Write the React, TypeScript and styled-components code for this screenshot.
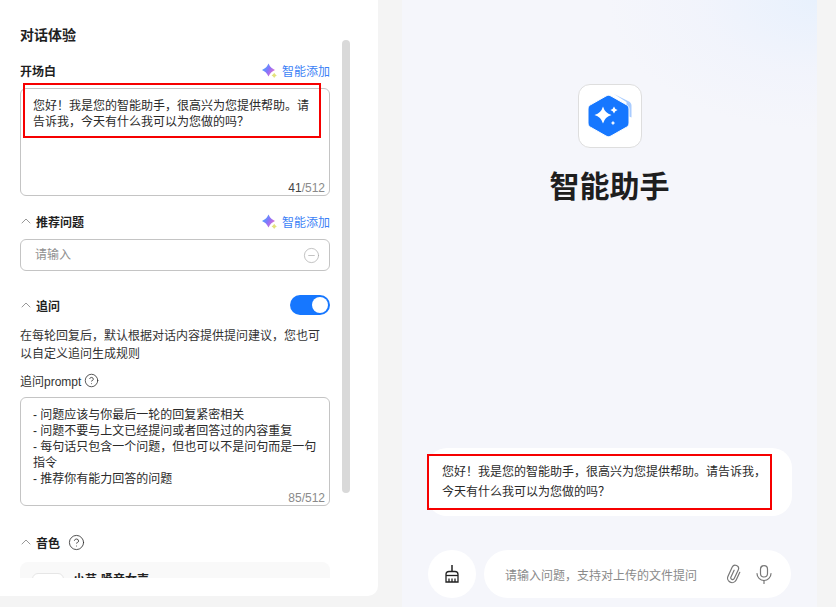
import React from 'react';
import styled, { createGlobalStyle } from 'styled-components';
import { ChevronUp, CircleHelp, CircleMinus } from 'lucide-react';

const FONT = `"Liberation Sans", "Noto Sans CJK SC", sans-serif`;

const GlobalStyle = createGlobalStyle`
  html, body {
    margin: 0;
    padding: 0;
    height: 100%;
    overflow: hidden;
    background: #f4f4f4;
    font-family: ${FONT};
  }
  * { box-sizing: border-box; }
`;

const Page = styled.div`
  width: 836px;
  height: 607px;
  display: flex;
  overflow: hidden;
`;

const ConfigPanel = styled.aside`
  position: relative;
  width: 378px;
  height: 596px;
  background: #fff;
  border-bottom-right-radius: 10px;
  overflow: hidden;
  display: flex;
  flex: none;
`;

const ConfigScroll = styled.div`
  width: 330px;
  height: 578px;
  padding: 27px 0 0 20px;
  overflow: hidden;
  flex: none;
`;

const Scrollbar = styled.div`
  width: 8px;
  height: 453px;
  margin: 40px 0 0 12px;
  background: #d9d9d9;
  border-radius: 4px;
  flex: none;
`;

const PanelTitle = styled.h2`
  margin: 0 0 19px;
  font-size: 14px;
  line-height: 16px;
  font-weight: 700;
  color: #1f1f1f;
`;

const SectionHeader = styled.div<{ $mt?: number; $mb?: number }>`
  display: flex;
  align-items: center;
  justify-content: space-between;
  height: 16px;
  margin-top: ${p => p.$mt ?? 0}px;
  margin-bottom: ${p => p.$mb ?? 10}px;
`;

const SectionLabel = styled.div`
  display: flex;
  align-items: center;
  font-size: 12px;
  font-weight: 700;
  color: #1f1f1f;
`;

const Caret = styled(ChevronUp)`
  width: 16px;
  height: 16px;
  margin: 0 2px 0 -2px;
  color: #999;
`;

const SmartAdd = styled.div`
  display: flex;
  align-items: center;
  gap: 5px;
  font-size: 12px;
  color: #3b7ff6;
`;

const TextBox = styled.div<{ $height: number }>`
  position: relative;
  width: 310px;
  height: ${p => p.$height}px;
  padding: 9px 12px;
  border: 1px solid #c4c4c4;
  border-radius: 6px;
  font-size: 12px;
  line-height: 16px;
  color: #2a2a2a;
`;

const Counter = styled.div`
  position: absolute;
  right: 4px;
  bottom: 0;
  font-size: 12px;
  line-height: 14px;
  color: #8a8a8a;
  b {
    font-weight: 400;
    color: #444;
  }
`;

const InputBox = styled.div`
  width: 310px;
  height: 32px;
  padding: 0 9px 0 14px;
  display: flex;
  align-items: center;
  justify-content: space-between;
  border: 1px solid #c4c4c4;
  border-radius: 6px;
  font-size: 12px;
  color: #8f8f8f;
`;

const Placeholder = styled.span`
  margin-top: -3px;
`;

const Toggle = styled.div`
  position: relative;
  width: 40px;
  height: 20px;
  border-radius: 10px;
  background: #1677ff;
  &::after {
    content: '';
    position: absolute;
    top: 2px;
    right: 2px;
    width: 16px;
    height: 16px;
    border-radius: 50%;
    background: #fff;
  }
`;

const Hint = styled.p`
  margin: 0 0 9px;
  font-size: 12px;
  line-height: 18px;
  color: #333;
`;

const FieldLabel = styled.div`
  display: flex;
  align-items: center;
  gap: 3px;
  height: 16px;
  margin-bottom: 9px;
  font-size: 12px;
  color: #333;
`;

const VoiceHelp = styled(CircleHelp)`
  margin-left: 8px;
  color: #333;
`;

const VoiceCard = styled.div`
  width: 310px;
  height: 60px;
  padding: 11px 12px;
  display: flex;
  gap: 9px;
  background: #f9f9f9;
  border-radius: 8px;
`;

const VoiceThumb = styled.div`
  width: 32px;
  height: 32px;
  background: #fff;
  border: 1px solid #e6e6e6;
  border-radius: 6px;
`;

const VoiceName = styled.div`
  font-size: 12px;
  font-weight: 700;
  line-height: 14px;
  color: #222;
`;

const ChatPanel = styled.main`
  margin-left: 24px;
  width: 415px;
  height: 607px;
  background:
    radial-gradient(ellipse 210px 130px at 100% 0, #e8f1fd 0, rgba(240, 243, 252, 0.7) 55%, rgba(245, 246, 251, 0) 100%),
    #f5f6fb;
  display: flex;
  flex-direction: column;
  align-items: center;
  overflow: hidden;
  flex: none;
`;

const AppLogo = styled.div`
  width: 64px;
  height: 64px;
  margin-top: 84px;
  display: flex;
  align-items: center;
  justify-content: center;
  background: #fff;
  border: 1px solid #dedede;
  border-radius: 12px;
`;

const AppName = styled.h1`
  margin: 15px 0 0;
  font-size: 30px;
  line-height: 48px;
  font-weight: 700;
  color: #1e1e1e;
`;

const Greeting = styled.div`
  position: relative;
  width: 365px;
  height: 68px;
  margin-top: 237px;
  padding: 14px 25px 14px 15px;
  background: #fff;
  border-radius: 20px;
  font-size: 12px;
  line-height: 20px;
  color: #2a2a2a;
`;

const Composer = styled.div`
  display: flex;
  gap: 8px;
  margin-top: 34px;
  align-items: center;
`;

const ClearButton = styled.div`
  width: 48px;
  height: 48px;
  border-radius: 50%;
  background: #fff;
  display: flex;
  align-items: center;
  justify-content: center;
`;

const ComposerInput = styled.div`
  width: 307px;
  height: 48px;
  padding: 0 19px 0 21px;
  border-radius: 24px;
  background: #fff;
  display: flex;
  align-items: center;
  font-size: 12px;
  color: #8a8a8a;
`;

const ComposerText = styled.span`
  flex: 1;
`;

const ComposerIcons = styled.div`
  display: flex;
  align-items: center;
  gap: 13px;
`;

const RedBox = styled.div<{ $top: number; $left: number; $w: number; $h: number }>`
  position: absolute;
  top: ${p => p.$top}px;
  left: ${p => p.$left}px;
  width: ${p => p.$w}px;
  height: ${p => p.$h}px;
  border: 2px solid #f60000;
  pointer-events: none;
`;

// four-pointed star, k sets how pinched the waist is
const star = (cx: number, cy: number, r: number, k = 0.22) => {
  const c = r * k;
  return `M${cx} ${cy - r}Q${cx + c} ${cy - c} ${cx + r} ${cy}Q${cx + c} ${cy + c} ${cx} ${cy + r}Q${cx - c} ${cy + c} ${cx - r} ${cy}Q${cx - c} ${cy - c} ${cx} ${cy - r}Z`;
};

const Sparkle = ({ id }: { id: string }) => (
  <svg width="15" height="15" viewBox="0 0 15 15">
    <defs>
      <linearGradient id={id} x1="0" y1="0.2" x2="1" y2="0.8">
        <stop offset="0" stopColor="#38b0ff" />
        <stop offset="0.5" stopColor="#8b72fa" />
        <stop offset="1" stopColor="#f46fc4" />
      </linearGradient>
    </defs>
    <path d={star(6.5, 7, 6.5, 0.3)} fill={`url(#${id})`} />
    <path d={star(12.2, 12.4, 2.6, 0.3)} fill="#e3e27c" />
  </svg>
);

const LogoMark = () => (
  <svg width="44" height="44" viewBox="0 0 44 44">
    <path d="M26 0l15 7.500c1.500.8 2.500 2.300 2.500 4v12l-5-2V8z" fill="#a9ccff" />
    <path d="M18 2c1.600-.9 3.400-.9 5 0l15.500 8.800c1.600.9 2.500 2.500 2.500 4.200v14c0 1.700-.9 3.300-2.500 4.200L23 42c-1.600.9-3.400.9-5 0L2.500 33.200C.9 32.300 0 30.700 0 29V15c0-1.700.9-3.300 2.500-4.200z" fill="#1677ff" stroke="#fff" strokeWidth="1" />
    <path d={star(15, 21, 8.5)} fill="#fff" />
    <path d={star(26, 16, 3.6)} fill="#fff" />
    <path d={star(25, 29, 2.2)} fill="#fff" />
  </svg>
);

const BroomIcon = () => (
  <svg width="14" height="18" viewBox="0 0 14 18" fill="none" stroke="#222" strokeWidth="1.300">
    <path d="M7 0v6.500" strokeWidth="1.500" />
    <path d="M1 17V9.500C1 7.800 2.300 6.500 4 6.500h6c1.700 0 3 1.300 3 3V17z" />
    <path d="M1 10.500h12" />
    <path d="M4 17v-3.500M7 17v-3.500M10 17v-3.500" />
  </svg>
);

const ClipIcon = () => (
  <svg width="18" height="20" viewBox="0 0 18 20" fill="none" stroke="#777" strokeWidth="1.200" strokeLinecap="round">
    <g transform="rotate(25 9 10)">
      <path d="M13.500 6V14.500a4.500 4.500 0 0 1-9 0V4.500a3.300 3.300 0 0 1 6.600 0v9.500a1.800 1.800 0 0 1-3.600 0V6.500" />
    </g>
  </svg>
);

const MicIcon = () => (
  <svg width="16" height="19" viewBox="0 0 16 19" fill="none" stroke="#777" strokeWidth="1.200" strokeLinecap="round">
    <rect x="4.500" y="0.700" width="7" height="11.300" rx="3.500" />
    <path d="M1 8.500a7 7 0 0 0 14 0" />
    <path d="M8 15.500v3" />
  </svg>
);

export default function App() {
  return (
    <Page>
      <GlobalStyle />
      <ConfigPanel>
        <ConfigScroll>
          <PanelTitle>对话体验</PanelTitle>

          <SectionHeader>
            <SectionLabel>开场白</SectionLabel>
            <SmartAdd><Sparkle id="sparkleA" />智能添加</SmartAdd>
          </SectionHeader>
          <TextBox $height={108}>
            您好！我是您的智能助手，很高兴为您提供帮助。请告诉我，今天有什么我可以为您做的吗？
            <Counter><b>41</b>/512</Counter>
          </TextBox>

          <SectionHeader $mt={17}>
            <SectionLabel><Caret strokeWidth={1.500} />推荐问题</SectionLabel>
            <SmartAdd><Sparkle id="sparkleB" />智能添加</SmartAdd>
          </SectionHeader>
          <InputBox>
            <Placeholder>请输入</Placeholder>
            <CircleMinus size={17} strokeWidth={1} color="#aaa" />
          </InputBox>

          <SectionHeader $mt={26} $mb={14}>
            <SectionLabel><Caret strokeWidth={1.500} />追问</SectionLabel>
            <Toggle />
          </SectionHeader>
          <Hint>在每轮回复后，默认根据对话内容提供提问建议，您也可以自定义追问生成规则</Hint>
          <FieldLabel>追问prompt<CircleHelp size={15} strokeWidth={1.300} color="#333" /></FieldLabel>
          <TextBox $height={109}>
            - 问题应该与你最后一轮的回复紧密相关<br />
            - 问题不要与上文已经提问或者回答过的内容重复<br />
            - 每句话只包含一个问题，但也可以不是问句而是一句指令<br />
            - 推荐你有能力回答的问题
            <Counter>85/512</Counter>
          </TextBox>

          <SectionHeader $mt={28} $mb={12}>
            <SectionLabel><Caret strokeWidth={1.500} />音色<VoiceHelp size={17} strokeWidth={1.200} /></SectionLabel>
          </SectionHeader>
          <VoiceCard>
            <VoiceThumb />
            <VoiceName>小芸-嗓音女声</VoiceName>
          </VoiceCard>
        </ConfigScroll>
        <Scrollbar />
        <RedBox $top={83} $left={23} $w={298} $h={55} />
      </ConfigPanel>

      <ChatPanel>
        <AppLogo><LogoMark /></AppLogo>
        <AppName>智能助手</AppName>
        <Greeting>
          您好！我是您的智能助手，很高兴为您提供帮助。请告诉我，今天有什么我可以为您做的吗？
          <RedBox $top={6} $left={0} $w={345} $h={56} />
        </Greeting>
        <Composer>
          <ClearButton><BroomIcon /></ClearButton>
          <ComposerInput>
            <ComposerText>请输入问题，支持对上传的文件提问</ComposerText>
            <ComposerIcons>
              <ClipIcon />
              <MicIcon />
            </ComposerIcons>
          </ComposerInput>
        </Composer>
      </ChatPanel>
    </Page>
  );
}
